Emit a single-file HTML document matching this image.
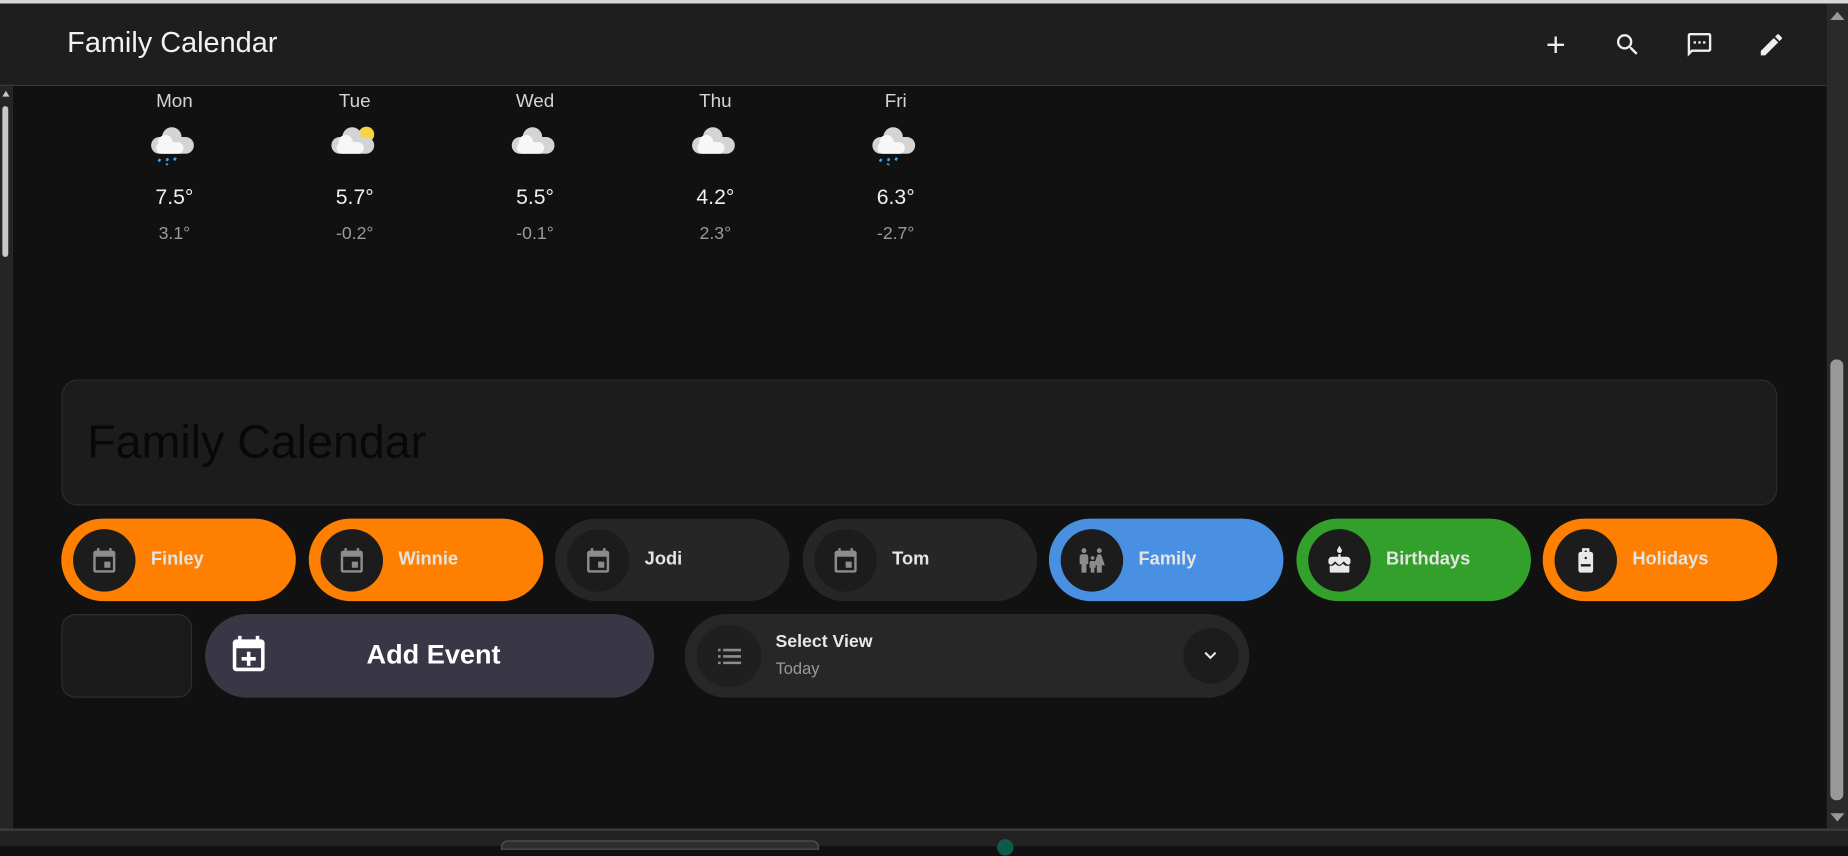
<!DOCTYPE html>
<html><head><meta charset="utf-8">
<style>
*{box-sizing:border-box;margin:0;padding:0}
html,body{width:1848px;height:846px;overflow:hidden;background:#111;font-family:"Liberation Sans",sans-serif}
#w{position:absolute;left:0;top:0;width:1568px;height:718px;transform:scale(1.17857);transform-origin:0 0;background:#111}
.a{position:absolute}
.chip{position:absolute;top:440px;width:199px;height:70px;border-radius:35px}
.chip .c{position:absolute;left:10px;top:9px;width:53px;height:53px;border-radius:50%;background:#1c1c1c}
.chip .c svg{position:absolute;left:14px;top:14px}
.chip .t{position:absolute;left:76px;top:26px;font-weight:bold;font-size:15.5px;color:#e4e4e4}
.day{position:absolute;width:80px;text-align:center}
</style></head><body><div id="w">
<div class="a" style="left:0;top:0;width:1568px;height:3px;background:#d8d8d8"></div>
<div class="a" style="left:0;top:3px;width:1550px;height:70px;background:#1e1e1e;border-bottom:1px solid #3a3a3a"></div>
<div class="a" style="left:10px;top:73px;width:1px;height:631px;background:#2a2a2a"></div>
<div class="a" style="left:0;top:73px;width:10px;height:631px;background:#252525"></div>
<div class="a" style="left:2px;top:77px;width:0;height:0;border-left:3px solid transparent;border-right:3px solid transparent;border-bottom:5px solid #c8c8c8"></div>
<div class="a" style="left:2px;top:90px;width:5px;height:128px;border-radius:3px;background:#c8c8c8"></div>
<div class="a" style="left:1550px;top:3px;width:18px;height:701px;background:#2a2a2a"></div>
<div class="a" style="left:1553px;top:305px;width:11px;height:374px;border-radius:5px;background:#999"></div>
<div class="a" style="left:1553px;top:10px;width:0;height:0;border-left:6px solid transparent;border-right:6px solid transparent;border-bottom:7px solid #999"></div>
<div class="a" style="left:1553px;top:690px;width:0;height:0;border-left:6px solid transparent;border-right:6px solid transparent;border-top:7px solid #999"></div>
<div class="a" style="left:57px;top:23px;font-size:24.5px;color:#f2f2f2">Family Calendar</div>
<svg class="a" style="left:1308px;top:26px" width="24" height="24" viewBox="0 0 24 24"><path d="M19 13h-6v6h-2v-6H5v-2h6V5h2v6h6v2z" fill="#eee"/></svg>
<svg class="a" style="left:1369px;top:26px" width="24" height="24" viewBox="0 0 24 24"><path d="M15.5 14h-.79l-.28-.27A6.470 6.470 0 0 0 16 9.5 6.5 6.5 0 1 0 9.5 16c1.610 0 3.090-.59 4.230-1.57l.27.28v.79l5 4.990L20.490 19l-4.990-5zm-6 0C7.010 14 5 11.990 5 9.5S7.010 5 9.5 5 14 7.010 14 9.5 11.990 14 9.5 14z" fill="#eee"/></svg>
<svg class="a" style="left:1430px;top:26px" width="24" height="24" viewBox="0 0 24 24"><path d="M20 2H4c-1.1 0-2 .9-2 2v18l4-4h14c1.1 0 2-.9 2-2V4c0-1.1-.9-2-2-2zm0 14H5.17L4 17.17V4h16v12zM7 9h2v2H7zm4 0h2v2h-2zm4 0h2v2h-2z" fill="#eee"/></svg>
<svg class="a" style="left:1491px;top:26px" width="24" height="24" viewBox="0 0 24 24"><path d="M3 17.25V21h3.75L17.81 9.94l-3.75-3.75L3 17.25zM20.71 7.04a1 1 0 0 0 0-1.41l-2.34-2.34a1 1 0 0 0-1.41 0l-1.83 1.83 3.75 3.75 1.83-1.83z" fill="#eee"/></svg>

<div id="wx"></div>
<script>
var d=[["Mon","7.5°","3.1°",1,0],["Tue","5.7°","-0.2°",0,1],["Wed","5.5°","-0.1°",0,0],["Thu","4.2°","2.3°",0,0],["Fri","6.3°","-2.7°",1,0]];
var h="";d.forEach(function(x,i){var cx=148+i*153;
h+='<div class="day" style="left:'+(cx-40)+'px;top:78px;font-size:16px;color:#d4d4d4">'+x[0]+'</div>';
h+='<svg class="a" style="left:'+(cx-22)+'px;top:103px" width="44" height="44" viewBox="0 0 40 40">'+(x[4]?'<circle cx="29" cy="10" r="6" fill="#f9d342"/>':'')+'<circle cx="18" cy="12" r="7.5" fill="#d4d4d4"/><rect x="2" y="12" width="33" height="13" rx="6.5" fill="#d4d4d4"/><circle cx="13" cy="16" r="5.5" fill="#f7f7f7"/><rect x="6" y="16" width="21" height="9" rx="4.5" fill="#f7f7f7"/>'+(x[3]?'<path d="M9 29l-1.2 2M15 28.5l-1 2M21 28l-1.2 2M14.5 32.5l-.6 1.2" stroke="#3aa0e8" stroke-width="2"/>':'')+'</svg>';
h+='<div class="day" style="left:'+(cx-40)+'px;top:157px;font-size:18px;color:#f0f0f0">'+x[1]+'</div>';
h+='<div class="day" style="left:'+(cx-40)+'px;top:190px;font-size:15px;color:#9a9a9a">'+x[2]+'</div>';});
document.getElementById("wx").outerHTML=h;
</script>

<div class="a" style="left:52px;top:322px;width:1456px;height:107px;background:#1c1c1c;border:1px solid #2c2c2c;border-radius:14px"></div>
<div class="a" style="left:74px;top:353px;font-size:39.5px;color:#080808">Family Calendar</div>

<div id="chips"></div>
<script>
var cal='<svg width="25" height="25" viewBox="0 0 24 24"><path d="M19 4h-1V2h-2v2H8V2H6v2H5c-1.1 0-2 .9-2 2v14c0 1.1.9 2 2 2h14c1.1 0 2-.9 2-2V6c0-1.1-.9-2-2-2zm0 16H5V9h14v11zm-7-7h5v5h-5z" fill="#8c8c8c"/></svg>';
var fam='<svg width="25" height="25" viewBox="0 0 24 24"><path d="M16 4c0-1.11.89-2 2-2s2 .89 2 2-.89 2-2 2-2-.89-2-2zm4 18v-6h2.5l-2.54-7.63A2 2 0 0 0 18.06 7h-.12a2 2 0 0 0-1.9 1.37L13.5 16H16v6h4zM12.5 11.5c.83 0 1.5-.67 1.5-1.5s-.67-1.5-1.5-1.5S11 9.17 11 10s.67 1.5 1.5 1.5zM5.5 6c1.11 0 2-.89 2-2s-.89-2-2-2-2 .89-2 2 .89 2 2 2zm2 16v-7H9V9c0-1.1-.9-2-2-2H4c-1.1 0-2 .9-2 2v6h1.5v7h4zm6.5 0v-4h1v-4c0-.82-.68-1.5-1.5-1.5h-2c-.82 0-1.5.68-1.5 1.5v4h1v4h3z" fill="#8c8c8c"/></svg>';
var cake='<svg width="25" height="25" viewBox="0 0 24 24"><path d="M12 6c1.11 0 2-.9 2-2 0-.38-.1-.73-.29-1.03L12 0l-1.71 2.97A2 2 0 0 0 12 6zm6 3h-5V7h-2v2H6c-1.66 0-3 1.34-3 3v1.54c0 1.08.88 1.96 1.96 1.96.52 0 1.02-.2 1.38-.57l2.14-2.13 2.13 2.13c.74.74 2.03.74 2.77 0l2.14-2.13 2.13 2.13c.37.37.86.57 1.38.57 1.08 0 1.96-.88 1.96-1.96V12C21 10.34 19.66 9 18 9zm.04 7.5c-.78 0-1.5-.3-2.05-.85l-1.07-1.07-1.08 1.07c-1.08 1.08-3 1.08-4.08 0l-1.07-1.07-1.09 1.07a2.9 2.9 0 0 1-2.05.85c-.55 0-1.05-.17-1.47-.42V21c0 .55.45 1 1 1h14c.55 0 1-.45 1-1v-4.92c-.42.25-.92.42-1.47.42z" fill="#e8e8e8"/></svg>';
var kit='<svg width="25" height="25" viewBox="0 0 24 24"><path d="M9 2h6v3h1c1.1 0 2 .9 2 2v13c0 1.1-.9 2-2 2H8c-1.1 0-2-.9-2-2V7c0-1.1.9-2 2-2h1V2zm2 3h2V4h-2v1zm1 4a1 1 0 1 0 0 2 1 1 0 0 0 0-2zM8 15v2h8v-2H8z" fill="#e8e8e8"/></svg>';
var c=[["Finley","#ff8000",cal],["Winnie","#ff8000",cal],["Jodi","#262626",cal],["Tom","#262626",cal],["Family","#4a90e2",fam],["Birthdays","#33a02c",cake],["Holidays","#ff8000",kit]];
var h="";c.forEach(function(x,i){h+='<div class="chip" style="left:'+Math.round(52+i*209.5)+'px;background:'+x[1]+'"><div class="c">'+x[2]+'</div><div class="t">'+x[0]+'</div></div>';});
document.getElementById("chips").outerHTML=h;
</script>

<div class="a" style="left:52px;top:521px;width:111px;height:71px;background:#1a1a1a;border:1px solid #2e2e2e;border-radius:12px"></div>
<div class="a" style="left:174px;top:521px;width:381px;height:71px;background:#393746;border-radius:36px"></div>
<svg class="a" style="left:193px;top:538px" width="36" height="36" viewBox="0 0 24 24"><path d="M19 3h-1V1h-2v2H8V1H6v2H5c-1.11 0-2 .9-2 2v14c0 1.1.89 2 2 2h14c1.1 0 2-.9 2-2V5c0-1.1-.9-2-2-2zm0 16H5V8h14v11zm-8-9h2v3h3v2h-3v3h-2v-3H8v-2h3z" fill="#fff"/></svg>
<div class="a" style="left:311px;top:542px;font-size:23px;font-weight:bold;color:#fff">Add Event</div>
<div class="a" style="left:581px;top:521px;width:479px;height:71px;background:#272727;border-radius:36px"></div>
<div class="a" style="left:591px;top:530px;width:55px;height:53px;border-radius:50%;background:#1f1f1f"></div>
<svg class="a" style="left:606px;top:544px" width="26" height="26" viewBox="0 0 24 24"><path d="M3 6h2v2H3zm4 0h14v2H7zm-4 5h2v2H3zm4 0h14v2H7zm-4 5h2v2H3zm4 0h14v2H7z" fill="#8c8c8c"/></svg>
<div class="a" style="left:658px;top:536px;font-size:15px;font-weight:bold;color:#e8e8e8">Select View</div>
<div class="a" style="left:658px;top:559px;font-size:14px;color:#9a9a9a">Today</div>
<div class="a" style="left:1004px;top:533px;width:47px;height:47px;border-radius:50%;background:#1c1c1c"></div>
<svg class="a" style="left:1017px;top:546px" width="20" height="20" viewBox="0 0 24 24"><path d="M7.41 8.59 12 13.17l4.59-4.58L18 10l-6 6-6-6z" fill="#eee"/></svg>

<div class="a" style="left:0;top:703px;width:1568px;height:15px;background:#222;border-top:2px solid #3c3c3c"></div>
<div class="a" style="left:425px;top:713px;width:270px;height:8px;border-radius:6px 6px 0 0;background:#2e2e2e;border:1px solid #555"></div>
<div class="a" style="left:846px;top:712px;width:14px;height:14px;border-radius:50%;background:#0d5a4a"></div>
</div></body></html>
